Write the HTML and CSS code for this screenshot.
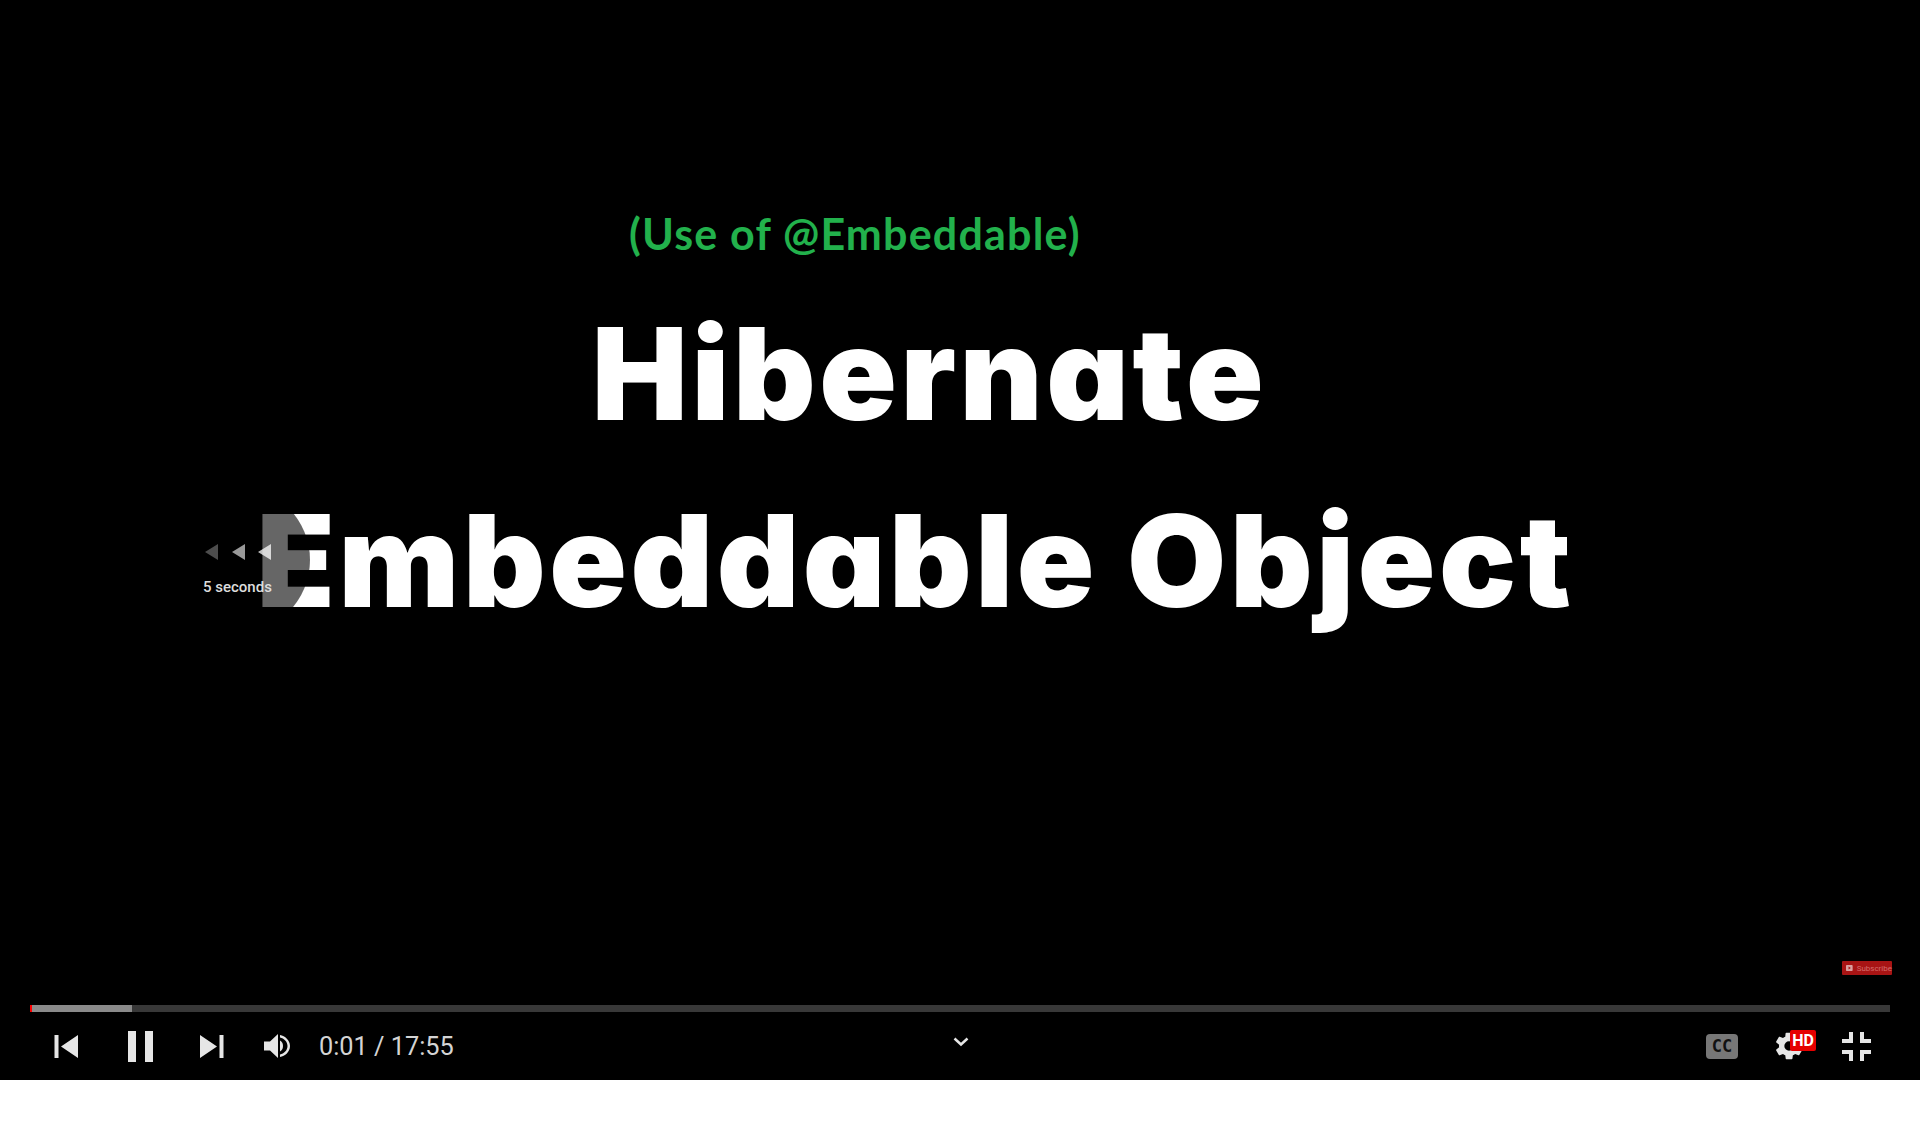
FILE: index.html
```html
<!DOCTYPE html>
<html lang="en">
<head>
    <meta charset="UTF-8">
    <title>Hibernate Embeddable Object</title>
    <link rel="stylesheet" href="styles.css">
</head>
<body>

<div class="player">
    <div class="video">
        <div class="subtitle">(Use of @Embeddable)</div>
        <h1 class="title title-top">Hibernate</h1>
        <h1 class="title title-bottom">Embeddable Object</h1>

        <!-- Seek back overlay -->
        <div class="seek-ripple"></div>
        <div class="seek">
            <div class="seek-arrows">
                <span class="arrow arrow-1"></span>
                <span class="arrow arrow-2"></span>
                <span class="arrow arrow-3"></span>
            </div>
            <div class="seek-label">5 seconds</div>
        </div>

        <div class="watermark">
            <svg width="9" height="8" viewBox="0 0 9 8"><rect width="9" height="8" rx="1" fill="#d9a0a0"/><path d="M3.500 2l3 2-3 2z" fill="#a81414"/></svg>
            <span>Subscribe</span>
        </div>
    </div>

    <div class="progress">
        <div class="progress-played"></div>
        <div class="progress-loaded"></div>
    </div>

    <div class="controls">
        <div class="controls-left">
            <button class="btn btn-prev">
                <svg width="24" height="23" viewBox="0 0 24 23"><path d="M0.500 0h4v23h-4zM24 0v23L7 11.500z"/></svg>
            </button>
            <button class="btn btn-pause">
                <svg width="25" height="31" viewBox="0 0 25 31"><path d="M0 0h8v31H0zM17 0h8v31h-8z"/></svg>
            </button>
            <button class="btn btn-next">
                <svg width="24" height="23" viewBox="0 0 24 23"><path d="M0 0v23l17-11.500zM19.500 0h4v23h-4z"/></svg>
            </button>
            <button class="btn btn-volume">
                <svg width="28" height="28" viewBox="0 0 28 28"><path d="M0 9.500h6l8-7.500v24l-8-7.500H0z"/><path d="M16 8.500c2 1 3 3 3 5.500s-1 4.500-3 5.500z"/><path d="M16 3c5 1 10 5 10 11s-5 10-10 11v-2.500c4-1 7.500-4 7.500-8.500S20 6.500 16 5.500z"/></svg>
            </button>
            <span class="time">0:01 / 17:55</span>
        </div>
        <svg class="chevron" width="16" height="10" viewBox="0 0 16 10"><path d="M1.500 1.500L8 7.500l6.500-6" fill="none" stroke="#e6e6e6" stroke-width="2.500"/></svg>
        <div class="controls-right">
            <div class="cc">
                <span class="cc-text">CC</span>
            </div>
            <div class="settings">
                <svg width="32" height="32" viewBox="0 0 24 24"><path fill-rule="evenodd" d="M19.400 13c.05-.3.100-.650.100-1s-.05-.7-.1-1l2.100-1.650c.2-.15.250-.4.100-.65l-2-3.450c-.1-.2-.4-.3-.6-.2l-2.500 1c-.5-.4-1.050-.7-1.700-1l-.35-2.650c-.05-.2-.25-.4-.5-.4h-4c-.25 0-.45.200-.5.400L9.200 5.050c-.6.300-1.200.600-1.700 1l-2.500-1c-.2-.1-.5 0-.6.200l-2 3.450c-.150.250-.1.500.100.650L4.600 11c-.05.300-.1.650-.1 1s.05.700.100 1l-2.100 1.650c-.2.150-.25.400-.1.650l2 3.450c.1.200.4.300.6.200l2.500-1c.5.400 1.050.700 1.700 1l.35 2.650c.05.200.25.400.5.400h4c.25 0 .45-.2.500-.4l.35-2.650c.6-.3 1.200-.6 1.700-1l2.500 1c.2.100.5 0 .6-.2l2-3.450c.150-.25.100-.5-.1-.65zM12 15.500a3.500 3.500 0 1 1 0-7 3.500 3.500 0 0 1 0 7z"/></svg>
                <span class="hd">HD</span>
            </div>
            <button class="btn btn-full">
                <svg width="29" height="29" viewBox="0 0 29 29"><path d="M7 0h4v11H0V7h7zM18 0h4v7h7v4H18zM0 18h11v11H7v-7H0zM18 18h11v4h-7v7h-4z"/></svg>
            </button>
        </div>
    </div>
</div>

</body>
</html>
```

FILE: styles.css
```css
body {
    margin: 0;
    background-color: #ffffff;
    font-family: Roboto, Arial, sans-serif;
}
.player {
    height: 1080px;
    background-color: #000000;
    display: flex;
    flex-direction: column;
    overflow: hidden;
}
.video {
    position: relative;
    height: 1005px;
    flex: none;
}
.subtitle {
    padding-top: 206px;
    padding-left: 629px;
    font-family: Lato, Arial, sans-serif;
    font-weight: 700;
    font-size: 43px;
    letter-spacing: 1.200px;
    line-height: 56px;
    color: #22b14c;
}
.title {
    margin: 0;
    font-family: Inter, Arial, sans-serif;
    font-weight: 900;
    font-size: 128px;
    letter-spacing: 3.600px;
    font-feature-settings: "cv11";
    line-height: 184px;
    color: #ffffff;
    text-align: center;
    white-space: nowrap;
}
.title-top {
    margin-top: 20px;
    padding-right: 61px;
}
.title-bottom {
    margin-top: 3px;
    padding-right: 89px;
}
/* Seek back overlay */
.seek-ripple {
    position: absolute;
    left: 162px;
    top: 486px;
    width: 148px;
    height: 148px;
    background-color: rgba(0, 0, 0, 0.6);
    border-radius: 50%;
}
.seek {
    position: absolute;
    left: 203px;
    top: 544px;
    width: 68px;
}
.seek-arrows {
    display: flex;
    justify-content: space-between;
    padding-left: 2px;
    height: 17px;
}
.arrow {
    width: 0;
    height: 0;
    border-top: 8.500px solid transparent;
    border-bottom: 8.500px solid transparent;
    border-right: 13px solid #ffffff;
}
.arrow-1 { opacity: 0.3; }
.arrow-2 { opacity: 0.6; }
.arrow-3 { opacity: 0.75; }
.seek-label {
    margin-top: 17px;
    font-size: 15px;
    font-weight: 500;
    line-height: 18px;
    color: #dddddd;
    white-space: nowrap;
}
.watermark {
    position: absolute;
    left: 1842px;
    top: 961px;
    width: 50px;
    height: 14px;
    background-color: #a81414;
    border-radius: 1px;
    display: flex;
    align-items: center;
    gap: 4px;
    padding-left: 4px;
    box-sizing: border-box;
    font-size: 8px;
    color: #d46a6a;
    white-space: nowrap;
}
.progress {
    height: 7px;
    margin: 0 30px;
    background-color: #383838;
    position: relative;
    flex: none;
}
.progress-played {
    position: absolute;
    left: 0;
    top: 0;
    bottom: 0;
    width: 2px;
    background-color: #ff0000;
}
.progress-loaded {
    position: absolute;
    left: 2px;
    top: 0;
    bottom: 0;
    width: 100px;
    background-color: #8a8a8a;
}
.controls {
    flex: 1;
    display: flex;
    align-items: center;
    justify-content: space-between;
    padding: 0 49px 0 54px;
    position: relative;
}
.controls svg {
    fill: #e6e6e6;
    display: block;
}
.controls-left,
.controls-right {
    display: flex;
    align-items: center;
}
.btn {
    background: none;
    border: none;
    padding: 0;
    cursor: pointer;
}
.btn-pause { margin-left: 50px; }
.btn-next { margin-left: 47px; }
.btn-volume { margin-left: 40px; }
.time {
    margin-left: 27px;
    font-size: 25.300px;
    color: #d4d4d4;
    white-space: nowrap;
}
.controls .chevron {
    position: absolute;
    left: 953px;
    top: 25px;
}
.cc {
    width: 32px;
    height: 25px;
    background-color: #777777;
    border-radius: 4px;
    display: flex;
    align-items: center;
    justify-content: center;
}
.cc-text {
    font-family: "DejaVu Sans Mono", monospace;
    font-weight: 700;
    font-size: 17px;
    line-height: 25px;
    color: #111111;
}
.settings {
    position: relative;
    margin-left: 35px;
    width: 32px;
}
.hd {
    position: absolute;
    left: 17px;
    top: 0;
    width: 26px;
    height: 21px;
    background-color: #e60000;
    border-radius: 2px;
    color: #ffffff;
    font-size: 16px;
    font-weight: 700;
    line-height: 21px;
    text-align: center;
}
.btn-full { margin-left: 37px; }
```
